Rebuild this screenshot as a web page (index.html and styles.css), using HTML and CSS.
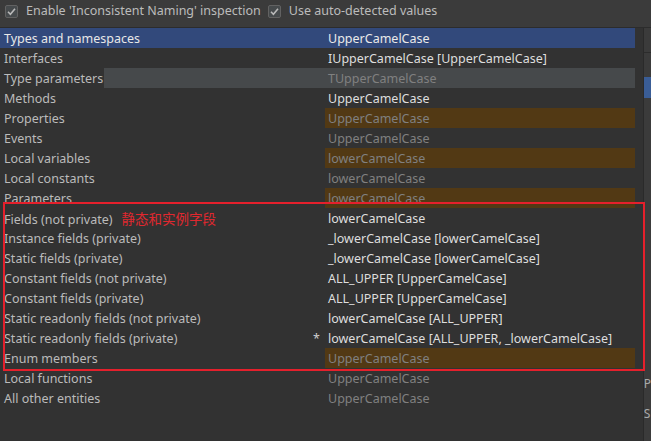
FILE: index.html
```html
<!DOCTYPE html>
<html>
<head>
<meta charset="utf-8">
<link rel="stylesheet" href="styles.css">
</head>
<body>
<div class="app">
  <div class="topbar">
    <label class="check"><span class="box"><svg viewBox="0 0 13 13" width="13" height="13"><path d="M3 6.8 L5.4 9.2 L10 3.8" fill="none" stroke="#b9b9b9" stroke-width="1.6"/></svg></span>Enable 'Inconsistent Naming' inspection</label>
    <label class="check"><span class="box"><svg viewBox="0 0 13 13" width="13" height="13"><path d="M3 6.8 L5.4 9.2 L10 3.8" fill="none" stroke="#b9b9b9" stroke-width="1.6"/></svg></span>Use auto-detected values</label>
  </div>
  <div class="main">
    <div class="list">
      <div class="row selected"><span class="name">Types and namespaces</span><span class="val">UpperCamelCase</span></div>
      <div class="row"><span class="name">Interfaces</span><span class="val hi">IUpperCamelCase [UpperCamelCase]</span></div>
      <div class="row hover"><span class="name"><span class="lbl">Type parameters</span></span><span class="val dim">TUpperCamelCase</span></div>
      <div class="row"><span class="name">Methods</span><span class="val hi">UpperCamelCase</span></div>
      <div class="row"><span class="name">Properties</span><span class="val dim warn">UpperCamelCase</span></div>
      <div class="row"><span class="name">Events</span><span class="val dim">UpperCamelCase</span></div>
      <div class="row"><span class="name">Local variables</span><span class="val dim warn">lowerCamelCase</span></div>
      <div class="row"><span class="name">Local constants</span><span class="val dim">lowerCamelCase</span></div>
      <div class="row"><span class="name">Parameters</span><span class="val dim warn">lowerCamelCase</span></div>
      <div class="row"><span class="name">Fields (not private)<span class="note">静态和实例字段</span></span><span class="val hi">lowerCamelCase</span></div>
      <div class="row"><span class="name">Instance fields (private)</span><span class="val hi">_lowerCamelCase [lowerCamelCase]</span></div>
      <div class="row"><span class="name">Static fields (private)</span><span class="val hi">_lowerCamelCase [lowerCamelCase]</span></div>
      <div class="row"><span class="name">Constant fields (not private)</span><span class="val hi">ALL_UPPER [UpperCamelCase]</span></div>
      <div class="row"><span class="name">Constant fields (private)</span><span class="val hi">ALL_UPPER [UpperCamelCase]</span></div>
      <div class="row"><span class="name">Static readonly fields (not private)</span><span class="val hi">lowerCamelCase [ALL_UPPER]</span></div>
      <div class="row"><span class="name">Static readonly fields (private)<span class="star">*</span></span><span class="val hi">lowerCamelCase [ALL_UPPER, _lowerCamelCase]</span></div>
      <div class="row"><span class="name">Enum members</span><span class="val dim warn">UpperCamelCase</span></div>
      <div class="row"><span class="name">Local functions</span><span class="val dim">UpperCamelCase</span></div>
      <div class="row"><span class="name">All other entities</span><span class="val dim">UpperCamelCase</span></div>
      <div class="annot"></div>
    </div>
    <div class="side">
      <div class="side-head"></div>
      <div class="side-tab"></div>
      <div class="side-fill"></div>
      <div class="side-text">P</div>
      <div class="side-text">S</div>
    </div>
  </div>
</div>
</body>
</html>
```

FILE: styles.css
```css
html, body {
  margin: 0;
  padding: 0;
}
body {
  background: #3b3b3b;
  font-family: "Noto Sans", "Noto Sans CJK SC", sans-serif;
  font-size: 12.5px;
  color: #bbbbbb;
}
.app {
  width: 651px;
  height: 441px;
  display: flex;
  flex-direction: column;
  overflow: hidden;
}
.topbar {
  height: 22px;
  padding-bottom: 5px;
  box-sizing: content-box;
  display: flex;
  align-items: center;
  padding-left: 5px;
  gap: 7px;
  background: #3b3b3b;
  border-bottom: 1px solid #2c2c2c;
}
.check {
  display: flex;
  align-items: center;
  gap: 8px;
  line-height: 16px;
}
.box {
  width: 13px;
  height: 13px;
  box-sizing: border-box;
  border: 1px solid #626262;
  border-radius: 2px;
  background: #464a4c;
  display: flex;
  align-items: center;
  justify-content: center;
}
.box svg {
  display: block;
  flex: none;
}
.main {
  flex: 1;
  display: flex;
}
.list {
  position: relative;
  width: 637px;
  padding-right: 8px;
  background: #323232;
  border-right: 1px solid #2a2a2a;
}
.row {
  display: flex;
  height: 20px;
  white-space: nowrap;
}
.row > span {
  box-sizing: border-box;
  padding-top: 3px;
  line-height: 16px;
}
.name {
  width: 325px;
  padding-left: 4px;
  position: relative;
}
.val {
  flex: 1;
  padding-left: 3px;
}
.hi { color: #dedede; }
.dim { color: #808080; }
.warn { background: #523914; }
.selected {
  background: #32497b;
  color: #e8e8e8;
}
.selected .val { color: #eaeaea; }
.hover { background: #46494b; }
.row.hover > .name { padding-left: 0; padding-top: 0; }
.lbl {
  display: inline-block;
  height: 20px;
  box-sizing: border-box;
  padding-top: 3px;
  line-height: 16px;
  background: #323232;
  padding-left: 4px;
  padding-right: 1px;
}
.note {
  color: #e0282f;
  margin-left: 9px;
  font-size: 13.5px;
}
.star {
  position: absolute;
  right: 5px;
  top: 3px;
  color: #cfcfcf;
}
.annot {
  position: absolute;
  left: 3px;
  top: 174px;
  width: 638px;
  height: 165px;
  border: 2px solid #e5202c;
  pointer-events: none;
}
.side {
  flex: 1;
  background: #3b3b3b;
  display: flex;
  flex-direction: column;
}
.side-head {
  height: 24px;
  border-bottom: 1px solid #2c2c2c;
}
.side-tab {
  margin-top: 24px;
  height: 21px;
  background: #3a5d96;
}
.side-fill {
  height: 271px;
}
.side-text {
  height: 30px;
  line-height: 30px;
  color: #aaaaaa;
  font-size: 12px;
}
```
